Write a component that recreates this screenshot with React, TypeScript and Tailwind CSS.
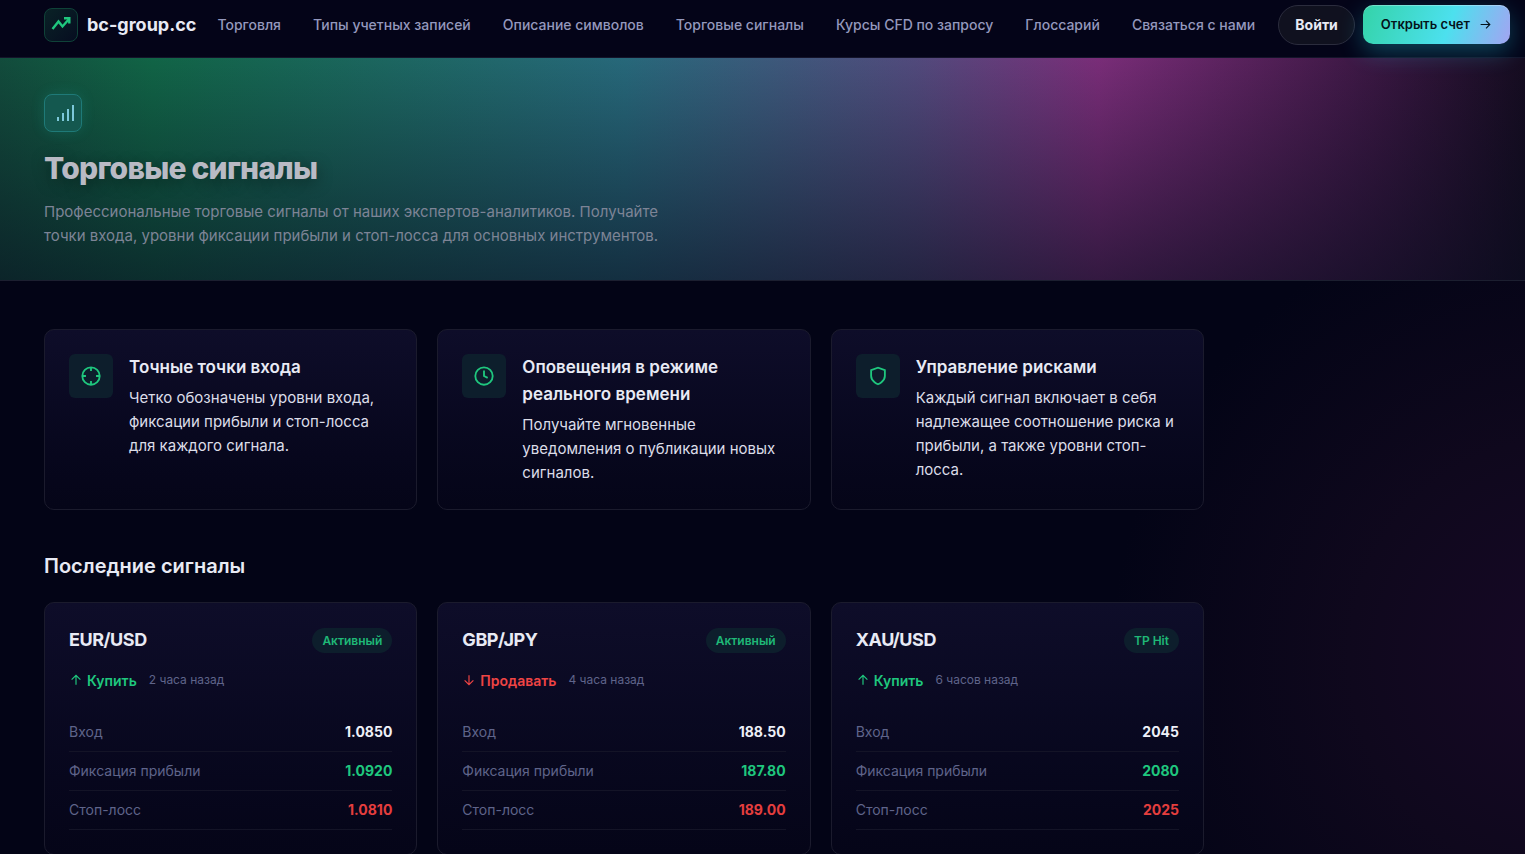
import { FC, ReactNode } from "react";
import React from 'react';

const NAV = [
    "Торговля",
    "Типы учетных записей",
    "Описание символов",
    "Торговые сигналы",
    "Курсы CFD по запросу",
    "Глоссарий",
    "Связаться с нами",
];

const SIGNALS = [
    { pair: "EUR/USD", status: "Активный", side: "buy", time: "2 часа назад", entry: "1.0850", take: "1.0920", stop: "1.0810" },
    { pair: "GBP/JPY", status: "Активный", side: "sell", time: "4 часа назад", entry: "188.50", take: "187.80", stop: "189.00" },
    { pair: "XAU/USD", status: "TP Hit", side: "buy", time: "6 часов назад", entry: "2045", take: "2080", stop: "2025" },
];

const CARD = "rounded-[10px] border border-[#1b1b2d] bg-linear-to-b from-[#0e0d29] to-[#050518] p-6";

const Icon: FC<{ size: number; width?: number; className?: string; children: ReactNode }> = ({ size, width = 2, className, children }) => (
    <svg
        width={size}
        height={size}
        viewBox="0 0 24 24"
        fill="none"
        stroke="currentColor"
        strokeWidth={width}
        className={className}
        aria-hidden="true"
    >
        {children}
    </svg>
);

const Header = () => (
    <header className="relative z-10 flex h-[58px] items-center border-b border-[#14142a] bg-[#040418] pr-[15px] pb-2 pl-11">
        <a href="#" className="flex items-center gap-[9px]">
            <span className="flex size-[34px] items-center justify-center rounded-[8px] border border-[#0f4238] bg-linear-to-br from-[#0a2226] to-[#060d20] text-[#1fc77e]">
                <Icon size={24} width={2.4}>
                    <path d="M3.5 16L9.500 8.500l4 5L20 6" />
                    <path d="M15 5.200H20.300V10.500" />
                </Icon>
            </span>
            <span className="text-[18px] font-bold text-[#e8eaf4]">bc-group.cc</span>
        </a>
        <nav className="ml-[21px] flex gap-8 text-[14px] font-medium whitespace-nowrap text-[#9498bd]">
            {NAV.map((item) => (
                <a key={item} href="#">{item}</a>
            ))}
        </nav>
        <div className="ml-auto flex items-center gap-2">
            <button className="h-10 rounded-full border border-[#2b2c3d] bg-[#10111f] px-4 text-[14px] font-bold text-[#e8eaf4]">
                Войти
            </button>
            <button className="flex h-[39px] items-center gap-[9px] rounded-[10px] bg-[linear-gradient(110deg,#34d3a8_0%,#4ce0ee_58%,#a3a4f2_100%)] px-[18px] text-[13px] font-semibold whitespace-nowrap text-[#04121a] shadow-[0_8px_24px_rgba(34,211,238,0.3),inset_0_1px_0_rgba(255,255,255,0.3)]">
                Открыть счет
                <Icon size={13} width={2}>
                    <path d="M3 12H20M13 5l7 7-7 7" />
                </Icon>
            </button>
        </div>
    </header>
);

const Hero = () => (
    <section className="border-b border-[#1c1f30] bg-[linear-gradient(180deg,rgba(8,12,30,0)_0%,rgba(8,12,30,0.62)_100%),linear-gradient(90deg,#124c3c_0%,#116446_10%,#27687a_41%,#514a7c_60%,#792d78_72%,#3a1742_90%,#150c20_100%)] px-11 pt-9 pb-8">
        <span className="flex size-[38px] items-center justify-center rounded-[8px] border border-[#1f7a78] bg-[#14584f] text-[#7cc8da] shadow-[0_0_14px_rgba(34,211,200,0.15)]">
            <svg width="24" height="24" viewBox="0 0 24 24" fill="currentColor" className="ml-1.5" aria-hidden="true">
                <path d="M3 16h2v4H3zM8 12h2v8H8zM13 8h2v12h-2zM18 4h2v16h-2z" />
            </svg>
        </span>
        <h1 className="mt-4 text-[30px] leading-[40px] font-extrabold tracking-tight text-[#b9bac4] [text-shadow:0_4px_16px_rgba(0,0,0,0.4)]">
            Торговые сигналы
        </h1>
        <p className="mt-3 max-w-[640px] text-[15px] leading-6 text-[#7d8496]">
            Профессиональные торговые сигналы от наших экспертов-аналитиков. Получайте точки входа, уровни фиксации прибыли и стоп-лосса для основных инструментов.
        </p>
    </section>
);

const Feature: FC<{ icon: ReactNode; title: string; children: ReactNode }> = ({ icon, title, children }) => (
    <div className={`${CARD} flex gap-4`}>
        <span className="flex size-11 shrink-0 items-center justify-center rounded-[6px] bg-[#0d1e2c] text-[#1fc77e]">
            {icon}
        </span>
        <div>
            <h3 className="text-[17px] leading-[27px] font-semibold text-[#e8eaf4]">{title}</h3>
            <p className="mt-[5px] text-[15px] leading-6 text-[#dcdde8]">{children}</p>
        </div>
    </div>
);

const Row: FC<{ label: string; value: string; color: string }> = ({ label, value, color }) => (
    <tr className="h-[39px] border-b border-[#141427]">
        <th scope="row" className="text-left text-[14px] font-normal text-[#5f648a]">{label}</th>
        <td className={`text-right text-[14px] font-bold ${color}`}>{value}</td>
    </tr>
);

const Signal: FC<{ signal: (typeof SIGNALS)[number] }> = ({ signal }) => {
    const buy = signal.side === "buy";

    return (
        <div className={CARD}>
            <div className="flex items-center justify-between">
                <h3 className="text-[18px] leading-[26px] font-bold tracking-tight text-[#e8eaf4]">{signal.pair}</h3>
                <span className="rounded-full bg-[#0d1e2c] px-[10px] text-[12px] leading-[25px] font-semibold text-[#1fb877]">
                    {signal.status}
                </span>
            </div>
            <div className="mt-4 flex h-[22px] items-center">
                <span className={`flex items-center gap-1 text-[14px] font-semibold ${buy ? "text-[#1fc77e]" : "text-[#ef4444]"}`}>
                    <Icon size={14} width={2}>
                        {buy ? <path d="M12 20V4M4.500 11.500L12 4l7.500 7.500" /> : <path d="M12 4v16M4.500 12.500L12 20l7.500-7.500" />}
                    </Icon>
                    {buy ? "Купить" : "Продавать"}
                </span>
                <span className="ml-3 text-[12px] text-[#5f648a]">{signal.time}</span>
            </div>
            <table className="mt-[21px] w-full border-collapse">
                <tbody>
                    <Row label="Вход" value={signal.entry} color="text-[#eef0f8]" />
                    <Row label="Фиксация прибыли" value={signal.take} color="text-[#1fc77e]" />
                    <Row label="Стоп-лосс" value={signal.stop} color="text-[#e53e3e]" />
                </tbody>
            </table>
        </div>
    );
};

export default function App() {
    return (
        <div className="h-screen overflow-hidden bg-[#030416] bg-[radial-gradient(circle_at_103%_77%,#170826_0%,#0f081d_220px,rgba(3,4,22,0)_460px)] font-['Inter','Liberation_Sans',sans-serif] text-[#e8eaf4]">
            <Header />
            <Hero />
            <main className="max-w-[1248px] px-11 pt-12">
                <section className="grid grid-cols-3 gap-5">
                    <Feature
                        title="Точные точки входа"
                        icon={
                            <Icon size={22}>
                                <circle cx="12" cy="12" r="9.5" />
                                <path d="M12 2.5v4M12 17.5v4M2.5 12h4M17.5 12h4" />
                            </Icon>
                        }
                    >
                        Четко обозначены уровни входа, фиксации прибыли и стоп-лосса для каждого сигнала.
                    </Feature>
                    <Feature
                        title="Оповещения в режиме реального времени"
                        icon={
                            <Icon size={22}>
                                <circle cx="12" cy="12" r="9.5" />
                                <path d="M12 6v6l4 2" />
                            </Icon>
                        }
                    >
                        Получайте мгновенные уведомления о публикации новых сигналов.
                    </Feature>
                    <Feature
                        title="Управление рисками"
                        icon={
                            <Icon size={22}>
                                <path d="M12 21s7.500-3 7.500-9V5.500L12 3 4.500 5.500V12c0 6 7.500 9 7.500 9z" />
                            </Icon>
                        }
                    >
                        Каждый сигнал включает в себя надлежащее соотношение риска и прибыли, а также уровни стоп-лосса.
                    </Feature>
                </section>
                <h2 className="mt-10 text-[20px] leading-8 font-semibold">Последние сигналы</h2>
                <section className="mt-5 grid grid-cols-3 gap-5">
                    {SIGNALS.map((signal) => (
                        <Signal key={signal.pair} signal={signal} />
                    ))}
                </section>
            </main>
        </div>
    );
}
